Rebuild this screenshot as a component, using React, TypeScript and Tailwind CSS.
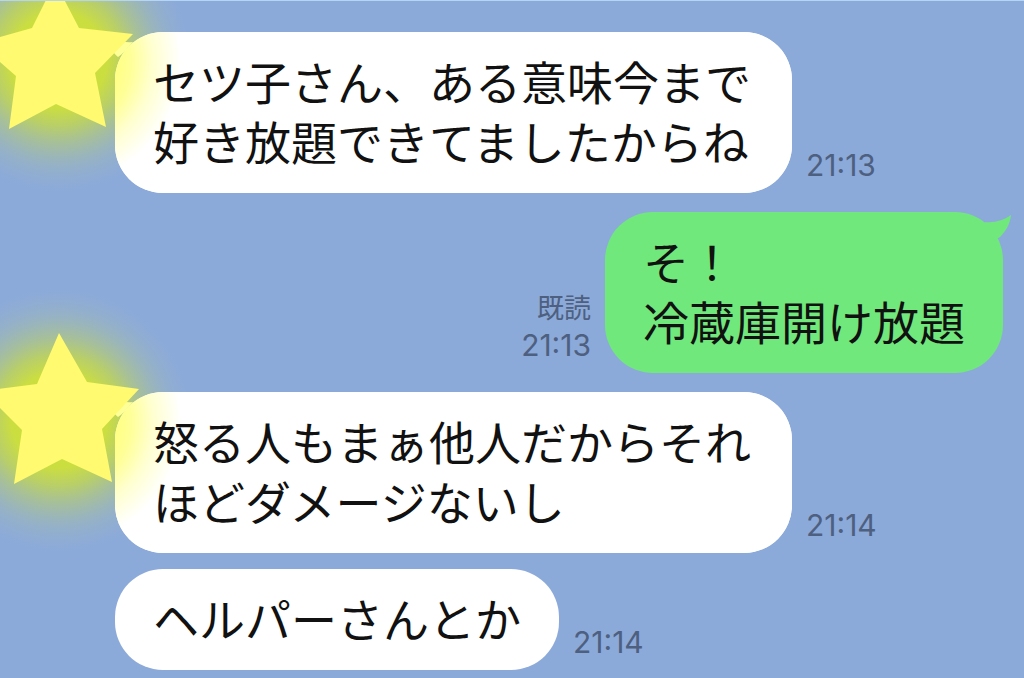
import React from 'react';

type Message = {
  id: number;
  text: string;
  time: string;
  mine?: boolean;
  read?: boolean;
};

type Group = {
  id: number;
  avatar?: string;
  messages: Message[];
};

const groups: Group[] = [
  {
    id: 1,
    avatar: 'M55 -50L79 -4L133 2L95 41L106 95L56 72L9 97L16 44L-22 11L32 -4Z',
    messages: [
      { id: 1, text: 'セツ子さん、ある意味今まで好き放題できてましたからね', time: '21:13' },
    ],
  },
  {
    id: 2,
    messages: [
      { id: 2, text: 'そ！\n冷蔵庫開け放題', time: '21:13', mine: true, read: true },
    ],
  },
  {
    id: 3,
    avatar: 'M59 -59L87 -10L139 -3L102 37L112 90L62 67L14 92L22 38L-17 -1L37 -8Z',
    messages: [
      { id: 3, text: '怒る人もまぁ他人だからそれほどダメージないし', time: '21:14' },
      { id: 4, text: 'ヘルパーさんとか', time: '21:14' },
    ],
  },
];

// Soft light behind the star, drawn under the bubbles
const StarGlow = ({ id }: { id: number }) => (
  <svg
    className="pointer-events-none absolute left-0 top-0 overflow-visible"
    width="115"
    height="160"
    viewBox="0 0 115 160"
    aria-hidden="true"
  >
    <defs>
      <radialGradient id={`glow-${id}`}>
        <stop offset="0" stopColor="#cde03c" />
        <stop offset="0.36" stopColor="#cbde40" />
        <stop offset="0.5" stopColor="#c4d84c" stopOpacity="0.8" />
        <stop offset="0.65" stopColor="#bcd068" stopOpacity="0.5" />
        <stop offset="0.82" stopColor="#b0c690" stopOpacity="0.22" />
        <stop offset="1" stopColor="#a0b8c0" stopOpacity="0" />
      </radialGradient>
    </defs>
    <circle cx="59" cy="28" r="132" fill={`url(#glow-${id})`} />
  </svg>
);

const Star = ({ path }: { path: string }) => (
  <svg
    className="pointer-events-none absolute left-0 top-0 overflow-visible"
    width="115"
    height="160"
    viewBox="0 0 115 160"
    aria-hidden="true"
  >
    <path d={path} fill="#fffa70" />
  </svg>
);

const Bubble = ({ message, first }: { message: Message; first: boolean }) => (
  <div
    className={`relative max-w-[677px] rounded-[48px] px-[38px] pb-[23px] pt-[18px] ${message.mine ? 'bg-[#70e87c]' : 'bg-white'}`}
  >
    {!message.mine && first && (
      <>
        <div className="absolute inset-0 rounded-[48px] bg-[radial-gradient(circle_at_-56px_30px,#ffff80_55px,#ffff98_72px,#ffffd0_94px,#ffffff_122px)]" />
        <svg className="absolute -left-2 top-0 overflow-visible" width="30" height="30" viewBox="0 0 30 30" aria-hidden="true">
          <path d="M26 10C16 11 7 8 0 3C1 12 5 20 11 25L15 22Z" fill="#ffff98" />
        </svg>
      </>
    )}
    {message.mine && (
      <svg className="absolute -right-2 top-0 overflow-visible" width="30" height="30" viewBox="0 0 30 30" aria-hidden="true">
        <path d="M4 10C14 11 23 8 30 3C29 12 25 19 19 25L10 30Z" fill="#70e87c" />
      </svg>
    )}
    <p className="relative whitespace-pre-line text-[46px] leading-[60px] text-[#111111]">{message.text}</p>
  </div>
);

const MessageRow = ({ message, first }: { message: Message; first: boolean }) => (
  <div
    className={`relative flex items-end gap-[14px] ${message.mine ? 'flex-row-reverse pr-[21px]' : 'pl-[115px]'}`}
  >
    <Bubble message={message} first={first} />
    <div className="flex shrink-0 flex-col items-end pb-[10px] font-['Inter','Noto_Sans_CJK_JP',sans-serif] text-[30px] leading-9 text-[#4e6080]">
      {message.read && <span className="text-[27px]">既読</span>}
      <time>{message.time}</time>
    </div>
  </div>
);

const App = () => {
  return (
    <main className="min-h-screen overflow-hidden border-t border-[#b5d5f5] bg-[#8caad9] pt-[31px] font-['Noto_Sans_CJK_JP',sans-serif]" lang="ja">
      <div className="flex flex-col gap-[19px]">
        {groups.map((group) => (
          <section key={group.id} className="relative flex flex-col gap-4">
            {group.avatar && <StarGlow id={group.id} />}
            {group.messages.map((message, index) => (
              <MessageRow key={message.id} message={message} first={index === 0} />
            ))}
            {group.avatar && <Star path={group.avatar} />}
          </section>
        ))}
      </div>
    </main>
  );
};

export default App;
